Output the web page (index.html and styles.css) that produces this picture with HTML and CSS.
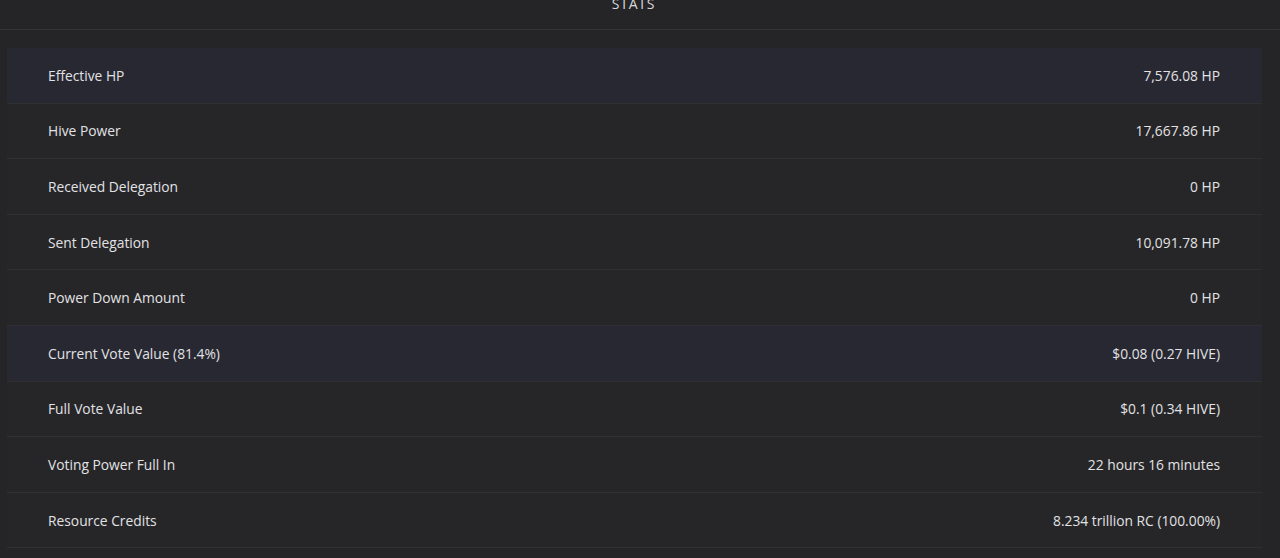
FILE: index.html
```html
<!DOCTYPE html>
<html lang="en">
<head>
<meta charset="utf-8">
<title>Stats</title>
<link rel="stylesheet" href="styles.css">
</head>
<body>
<header class="head"><span class="head-title">STATS</span></header>
<section class="stats">
  <div class="row row-hl"><span class="label">Effective HP</span><span class="value">7,576.08 HP</span></div>
  <div class="row"><span class="label">Hive Power</span><span class="value">17,667.86 HP</span></div>
  <div class="row"><span class="label">Received Delegation</span><span class="value">0 HP</span></div>
  <div class="row"><span class="label">Sent Delegation</span><span class="value">10,091.78 HP</span></div>
  <div class="row"><span class="label">Power Down Amount</span><span class="value">0 HP</span></div>
  <div class="row row-hl"><span class="label">Current Vote Value (81.4%)</span><span class="value">$0.08 (0.27 HIVE)</span></div>
  <div class="row"><span class="label">Full Vote Value</span><span class="value">$0.1 (0.34 HIVE)</span></div>
  <div class="row"><span class="label">Voting Power Full In</span><span class="value">22 hours 16 minutes</span></div>
  <div class="row"><span class="label">Resource Credits</span><span class="value">8.234 trillion RC (100.00%)</span></div>
</section>
</body>
</html>
```
FILE: styles.css
```css
html, body {
  margin: 0;
  padding: 0;
}
body {
  background: #252527;
  color: #e2e2e5;
  font-family: "Open Sans", "Noto Sans", sans-serif;
  font-size: 13.8px;
  height: 558px;
  overflow: hidden;
}
.head {
  height: 30px;
  box-sizing: border-box;
  border-bottom: 1px solid #343437;
  display: flex;
  justify-content: center;
  align-items: flex-start;
  padding-right: 13px;
  overflow: hidden;
}
.head-title {
  margin-top: -6px;
  line-height: 20px;
  font-size: 14px;
  letter-spacing: 0.8px;
  color: #d8d8dc;
}
.stats {
  padding: 18px 18px 0 7px;
  display: flex;
  flex-direction: column;
}
.row {
  height: 55.6px;
  box-sizing: border-box;
  border-bottom: 1px solid #303033;
  display: flex;
  align-items: center;
  justify-content: space-between;
  padding: 0 42px 0 41px;
  background: #262628;
}
.row-hl {
  background: #272831;
}
.label, .value {
  white-space: nowrap;
}
```
